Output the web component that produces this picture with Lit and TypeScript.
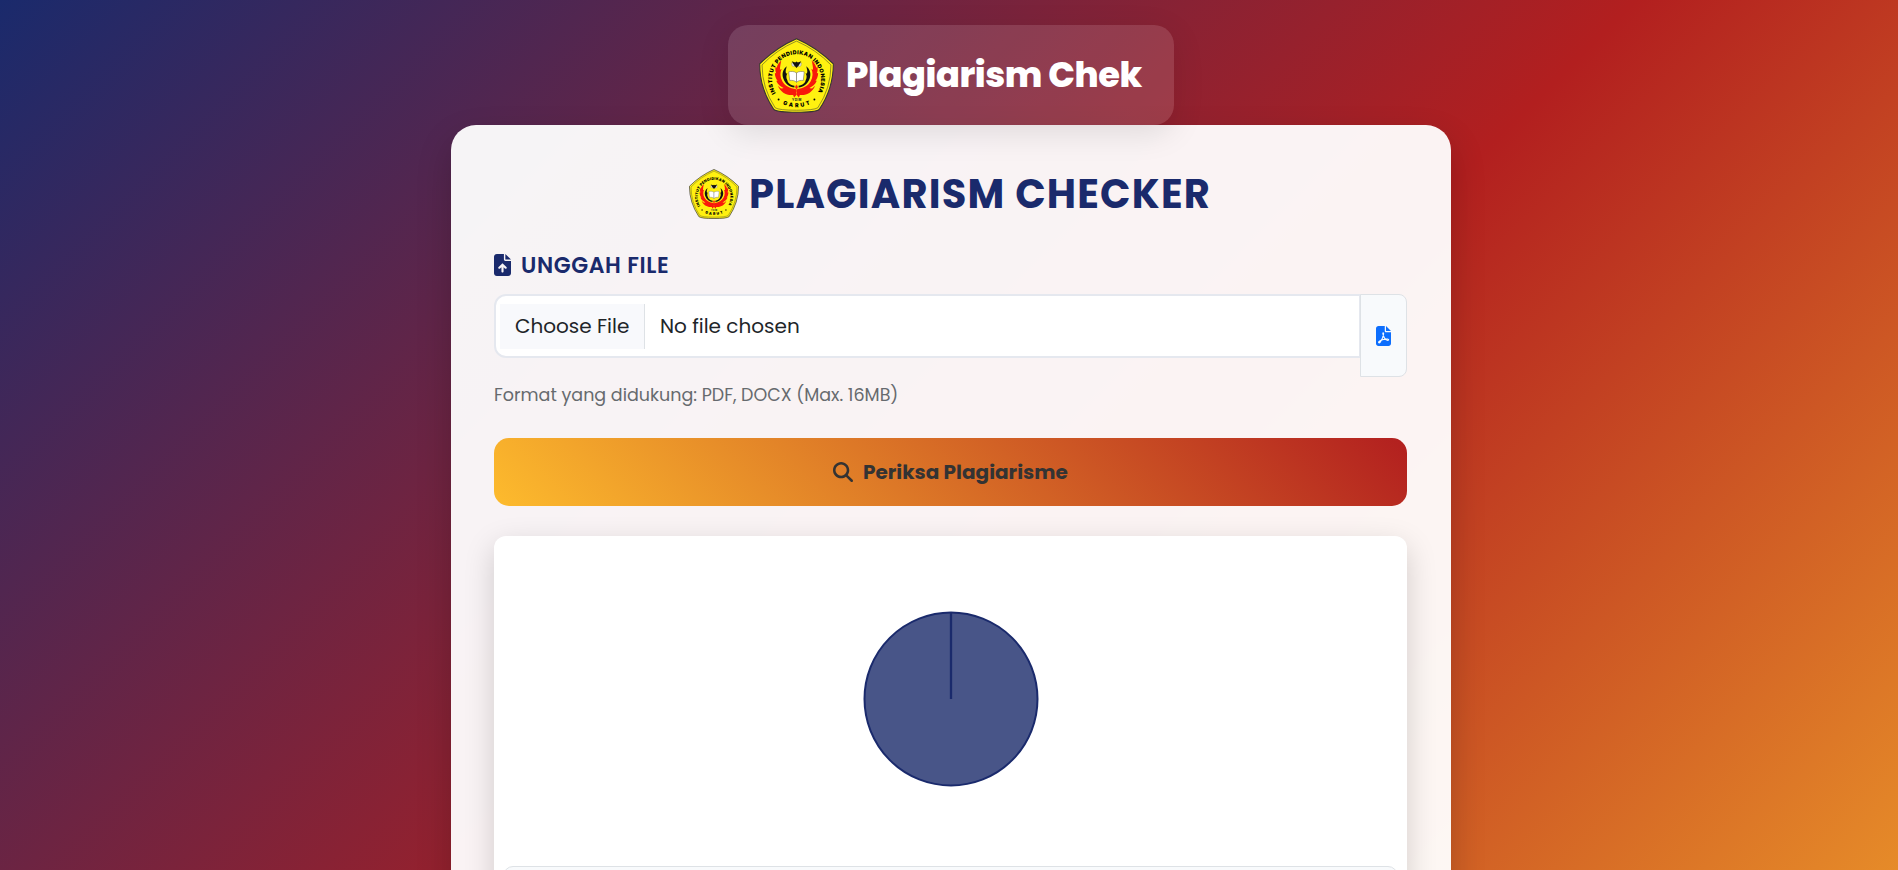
import { LitElement, html, css, svg } from "lit";
import { customElement } from "lit/decorators.js";

@customElement("campus-logo")
class CampusLogo extends LitElement {
  static styles = css`
    :host { display: block; flex: none; }
    svg { display: block; width: 100%; height: 100%; }
    .ring { font: 900 16px Inter, "Liberation Sans", sans-serif; fill: #000; }
    .tiny { font: 700 9px Inter, sans-serif; fill: #222; }
  `;
  render() {
    const half = svg`
      <path fill="#f8190b" d="M94 91 C86 98 81 106 81 112 L77 109 C76 116 76 122 79 128 L75 127 C75 136 78 144 83 150 L79 150 C83 161 92 167 101 171 L93 173 C102 183 114 186 125 184 L120 190 C129 190 135 187 139 184 L139 174 C118 172 104 163 97 151 C90 139 90 126 95 116 L90 118 C90 109 92 100 94 91Z"/>
      <path fill="#f8190b" d="M84 164 C94 175 108 180 124 180 L139 186 L139 190 L132 198 L129 191 C109 193 92 183 84 164Z"/>
      <path fill="#111" d="M110 108 C99 117 95 130 100 143 C106 159 119 168 133 169 L133 164 C121 162 113 156 112 148 C108 142 108 134 112 128 L108 129 C105 121 109 115 110 108Z"/>
      <path fill="#fff" stroke="#555" stroke-width="1.4" d="M139 127 C132 122 123 122 116 124 L119 149 C127 148 134 149 139 154Z"/>`;
    return html`<svg viewBox="28 26 222 217" preserveAspectRatio="none">
      <path d="M139 28 Q200 54 248 101 Q248 172 206 233 Q195 241 139 241 Q84 241 72 233 Q30 172 30 101 Q78 54 139 28Z" fill="#fff110" stroke="#333" stroke-width="3"/>
      <path d="M139 35 Q198 60 241 104 Q241 171 202 228 Q190 235 139 235 Q88 235 76 228 Q37 171 37 104 Q80 60 139 35Z" fill="none" stroke="#333" stroke-width="1.5"/>
      <path id="upper" d="M77.600 186 A72.500 74 0 1 1 200 187" fill="none"/>
      <path id="lower" d="M88 212 A90 80 0 0 0 190 212" fill="none"/>
      <text class="ring" textLength="308" lengthAdjust="spacing"><textPath href="#upper" textLength="308">INSTITUT PENDIDIKAN INDONESIA</textPath></text>
      <text class="ring"><textPath href="#lower" startOffset="50%" text-anchor="middle" textLength="83">GARUT</textPath></text>
      <circle cx="86" cy="204" r="2.8"/><circle cx="192" cy="204" r="2.8"/>
      ${half}
      <g transform="translate(278 0) scale(-1 1)">${half}</g>
      <path fill="#ddd" stroke="#777" d="M124 98 L134 99 L133 109 L126 107Z M154 98 L144 99 L145 109 L152 107Z"/>
      <path fill="#111" d="M125 93 L135 97 L139 94 L143 97 L153 93 L146 105 L139 113 L132 105Z"/>
      <path fill="#f8190b" stroke="#fff110" d="M139 160 L144 168 L139 176 L134 168Z"/>
      <text class="tiny" x="126" y="207" textLength="27">YDIM</text>
    </svg>`;
  }
}

@customElement("app-root")
class AppRoot extends LitElement {
  static styles = css`
    :host {
      display: flex; flex-direction: column; align-items: center;
      box-sizing: border-box; width: 100%; height: 870px; overflow: hidden; padding: 25px 0 0 4px;
      background: linear-gradient(135deg, #1a2a6c, #b21f1f, #fdbb2d) 0 0 / 100% 1375px no-repeat;
      font-family: Poppins, Inter, "Liberation Sans", sans-serif; color: #212529;
    }
    * { box-sizing: border-box; }
    span { white-space: nowrap; }
    .brand {
      position: relative; z-index: 1; flex: none; display: flex; align-items: center;
      width: 446px; height: 100px; padding-left: 31px; border-radius: 20px;
      background: rgba(255,255,255,.12); box-shadow: 0 8px 32px rgba(0,0,0,.1);
    }
    .brand campus-logo { width: 75px; height: 75px; }
    .brand span { margin-left: 12px; padding-bottom: 2px; color: #fff; font-size: 35.200px; font-weight: 800; letter-spacing: -.4px; }
    .panel {
      flex: none; width: 1000px; height: 1100px; padding: 43px 44px 0 43px; border-radius: 25px;
      background: rgba(255,255,255,.95); box-shadow: 0 15px 35px rgba(0,0,0,.2);
    }
    .title { display: flex; align-items: center; justify-content: flex-start; height: 52px; margin: 0; padding-left: 195px; color: #1a2a6c; }
    .title campus-logo { width: 50px; height: 50px; }
    .title span { margin-left: 10px; font-size: 40px; font-weight: 700; letter-spacing: 1.200px; }
    .label { display: flex; align-items: center; height: 28px; margin-top: 31px; color: #1a2a6c; }
    .label svg { width: 17px; height: 22px; }
    .label span { margin-left: 10px; font-size: 22px; font-weight: 600; letter-spacing: .6px; }
    .group { display: flex; align-items: flex-start; margin-top: 15px; height: 83px; }
    .file {
      display: flex; align-items: center; flex: 1; height: 64px; padding-left: 4px;
      border: 2px solid #e5e8ef; border-radius: 12px 0 0 12px; background: #fff; font-size: 20px;
    }
    .choose { display: flex; align-items: center; width: 145px; height: 45px; padding-left: 15px; background: #f8f9fc; border-right: 1px solid #dee2e6; }
    .chosen { margin-left: 15px; }
    .addon {
      display: flex; align-items: center; justify-content: center; width: 47px; height: 83px; margin-left: -1px;
      border: 1px solid #dee2e6; border-radius: 0 8px 8px 0; background: #f8fafc; color: #0d6efd;
    }
    .addon svg { width: 15px; height: 20px; }
    .hint { display: flex; align-items: center; height: 26px; margin-top: 5px; color: #666a6e; font-size: 17.500px; }
    .submit {
      display: flex; align-items: center; width: 100%; height: 68px; margin-top: 30px; padding-left: 339px;
      border-radius: 15px; background: linear-gradient(45deg, #fdbb2d, #b21f1f); color: #333;
    }
    .submit svg { width: 20px; height: 20px; }
    .submit span { margin-left: 10px; font-size: 20px; font-weight: 700; }
    .results {
      display: flex; flex-direction: column; align-items: center; height: 500px; margin-top: 30px; padding: 75px 9px 0;
      border-radius: 12px; background: #fff; box-shadow: 0 10px 30px rgba(0,0,0,.17);
    }
    .pie { width: 176px; height: 176px; flex: none; }
    .item { width: 100%; height: 80px; margin-top: 79px; flex: none; border: 1px solid #dee2e6; border-radius: 10px; background: #f8fafc; }
  `;
  render() {
    return html`
      <header class="brand"><campus-logo></campus-logo><span>Plagiarism Chek</span></header>
      <main class="panel">
        <h1 class="title"><campus-logo></campus-logo><span>PLAGIARISM CHECKER</span></h1>
        <div class="label">
          <svg viewBox="0 0 384 512" fill="currentColor" preserveAspectRatio="none"><path d="M64 0C28.700 0 0 28.700 0 64V448c0 35.300 28.700 64 64 64H320c35.300 0 64-28.700 64-64V160H256c-17.700 0-32-14.300-32-32V0H64zM256 0V128H384L256 0zM216 408c0 13.300-10.700 24-24 24s-24-10.700-24-24V305.900l-31 31c-9.400 9.400-24.600 9.400-33.900 0s-9.400-24.600 0-33.900l72-72c9.400-9.400 24.600-9.400 33.900 0l72 72c9.400 9.400 9.400 24.600 0 33.900s-24.600 9.400-33.900 0l-31-31V408z"/></svg>
          <span>UNGGAH FILE</span>
        </div>
        <div class="group">
          <div class="file"><span class="choose">Choose File</span><span class="chosen">No file chosen</span></div>
          <div class="addon">
            <svg viewBox="0 0 384 512" fill="currentColor"><path d="M64 0C28.700 0 0 28.700 0 64V448c0 35.300 28.700 64 64 64H320c35.300 0 64-28.700 64-64V160H256c-17.700 0-32-14.300-32-32V0H64zM256 0V128H384L256 0z"/><path fill="none" stroke="#f8fafc" stroke-width="30" stroke-linejoin="round" stroke-linecap="round" d="M178 200 C165 170 200 170 194 205 C188 275 155 345 108 411 C85 446 52 428 75 402 C120 360 220 330 295 333 C340 336 325 376 288 364 C240 348 195 290 178 200Z"/></svg>
          </div>
        </div>
        <div class="hint"><span>Format yang didukung: PDF, DOCX (Max. 16MB)</span></div>
        <div class="submit">
          <svg viewBox="0 0 512 512" fill="currentColor"><path d="M416 208c0 45.900-14.900 88.300-40 122.700L502.600 457.400c12.500 12.500 12.500 32.800 0 45.300s-32.800 12.500-45.300 0L330.700 376c-34.400 25.200-76.800 40-122.700 40C93.100 416 0 322.900 0 208S93.100 0 208 0S416 93.100 416 208zM208 352a144 144 0 1 0 0-288 144 144 0 1 0 0 288z"/></svg>
          <span>Periksa Plagiarisme</span>
        </div>
        <section class="results">
          <svg class="pie" viewBox="0 0 176 176"><circle cx="88" cy="88" r="86.500" fill="#485588" stroke="#1a2a6c" stroke-width="2"/><path d="M88 88V1.500" stroke="#1a2a6c" stroke-width="2.300"/></svg>
          <div class="item"></div>
        </section>
      </main>`;
  }
}
